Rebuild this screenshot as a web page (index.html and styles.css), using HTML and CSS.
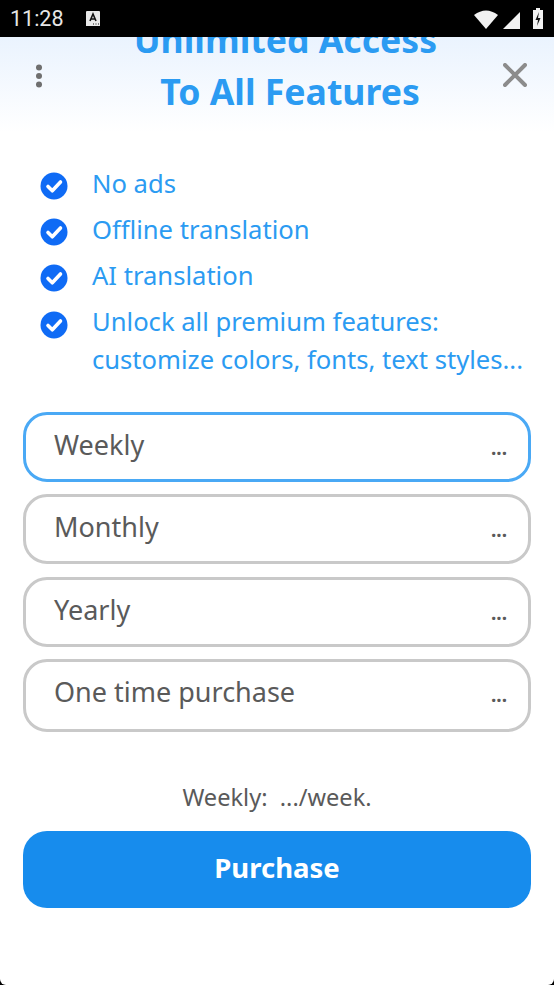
FILE: index.html
```html
<!DOCTYPE html>
<html lang="en">
<head>
<meta charset="utf-8">
<title>Unlimited Access</title>
<link rel="stylesheet" href="styles.css">
</head>
<body>
<div class="status">
  <span class="time">11:28</span>
  <svg class="notif" width="14" height="16" viewBox="0 0 14 16"><path d="M1 0h12a1 1 0 0 1 1 1v14h-14v-14a1 1 0 0 1 1-1z" fill="#e8e8e8"/><path d="M4 10l3-7 3 7M5 8h4" fill="none" stroke="#111" stroke-width="1.6"/><path d="M7 13h1M9.500 13h1M12 13h1" stroke="#111" stroke-width="1"/></svg>
  <span class="status-space"></span>
  <svg class="wifi" width="24" height="19" viewBox="0 0 24 19"><path d="M0 5Q12-4 24 5L12 19z" fill="#f2f2f2"/></svg>
  <svg class="signal" width="17" height="17" viewBox="0 0 17 17"><path d="M17 0v17H0z" fill="#f2f2f2"/></svg>
  <svg class="battery" width="10" height="21" viewBox="0 0 10 21"><path d="M3 0h4v2h3v19H0V2h3z" fill="#f2f2f2"/><path d="M6 4L2.500 12h2.500L4 18 7.500 10H5z" fill="#111"/></svg>
</div>
<main class="screen">
  <header class="hero">
    <svg class="menu" width="8" height="24" viewBox="0 0 8 24"><circle cx="4" cy="3.500" r="3" fill="#6f6f6f"/><circle cx="4" cy="12" r="3" fill="#6f6f6f"/><circle cx="4" cy="20.500" r="3" fill="#6f6f6f"/></svg>
    <h1 class="title">Unlimited Access&nbsp;<br>To All Features</h1>
    <svg class="close" width="24" height="24" viewBox="0 0 24 24"><path d="M2 2L22 22M22 2L2 22" stroke="#8c8c8c" stroke-width="4" stroke-linecap="round"/></svg>
  </header>
  <ul class="features">
    <li class="feature"><svg class="check" viewBox="0 0 28 28"><circle cx="14" cy="14" r="13.500" fill="#0f6bf5"/><path d="M8 14.500l4.300 4.300L20.500 10" fill="none" stroke="#fff" stroke-width="3.600" stroke-linecap="round" stroke-linejoin="round"/></svg><span>No ads</span></li>
    <li class="feature"><svg class="check" viewBox="0 0 28 28"><circle cx="14" cy="14" r="13.500" fill="#0f6bf5"/><path d="M8 14.500l4.300 4.300L20.500 10" fill="none" stroke="#fff" stroke-width="3.600" stroke-linecap="round" stroke-linejoin="round"/></svg><span>Offline translation</span></li>
    <li class="feature"><svg class="check" viewBox="0 0 28 28"><circle cx="14" cy="14" r="13.500" fill="#0f6bf5"/><path d="M8 14.500l4.300 4.300L20.500 10" fill="none" stroke="#fff" stroke-width="3.600" stroke-linecap="round" stroke-linejoin="round"/></svg><span>AI translation</span></li>
    <li class="feature"><svg class="check" viewBox="0 0 28 28"><circle cx="14" cy="14" r="13.500" fill="#0f6bf5"/><path d="M8 14.500l4.300 4.300L20.500 10" fill="none" stroke="#fff" stroke-width="3.600" stroke-linecap="round" stroke-linejoin="round"/></svg><span>Unlock all premium features:<br>customize colors, fonts, text styles...</span></li>
  </ul>
  <div class="plans">
    <div class="plan selected"><span>Weekly</span><span class="price">...</span></div>
    <div class="plan"><span>Monthly</span><span class="price">...</span></div>
    <div class="plan"><span>Yearly</span><span class="price">...</span></div>
    <div class="plan tall"><span>One time purchase</span><span class="price">...</span></div>
  </div>
  <p class="summary">Weekly:&nbsp; .../week.</p>
  <button class="buy" type="button">Purchase</button>
</main>
</body>
</html>
```
FILE: styles.css
```css
* { box-sizing: border-box; }
html, body { margin: 0; padding: 0; }
body {
  width: 554px;
  height: 985px;
  overflow: hidden;
  background: #000;
  font-family: "Noto Sans", "Open Sans", sans-serif;
}
.status {
  height: 37px;
  background: #000;
  display: flex;
  align-items: center;
  padding: 0 11px 0 10px;
  color: #e6e6e6;
}
.time {
  font-family: Roboto, sans-serif;
  font-size: 21.500px;
  line-height: 37px;
}
.notif { margin-left: 22px; }
.status-space { flex: 1; }
.wifi { margin-top: 2px; }
.signal { margin: 4px 0 0 5px; }
.battery { margin: 0 0 0 13px; }
.screen {
  height: 948px;
  overflow: hidden;
  background: #fff;
  border-radius: 0 0 6px 6px;
  padding: 0 23px;
}
.hero {
  height: 95px;
  margin: 0 -23px;
  padding: 0 27px 0 35px;
  display: flex;
  justify-content: space-between;
  background: linear-gradient(#eaf3fe, #ffffff);
}
.menu { margin-top: 27px; flex: none; }
.close { margin-top: 26px; flex: none; }
.title {
  margin: -24px 0 0 34px;
  text-align: center;
  font-size: 35.600px;
  line-height: 52px;
  font-weight: 700;
  color: #2b9bf2;
  white-space: nowrap;
}
.features {
  list-style: none;
  margin: 0;
  padding: 33px 0 0 17px;
  color: #2b9bf2;
  font-size: 25.600px;
  line-height: 38px;
}
.feature {
  display: flex;
  align-items: flex-start;
  gap: 25px;
  margin-bottom: 8px;
}
.feature span { margin-left: -1px; }
.check { width: 28px; height: 28px; flex: none; margin-top: 7px; }
.feature:last-child .check { margin-top: 8px; }
.plans {
  display: flex;
  flex-direction: column;
  gap: 12.300px;
  margin-top: 33px;
}
.plan {
  height: 70px;
  border: 3px solid #c9c9c9;
  border-radius: 24px;
  padding: 0 21px 0 28px;
  display: flex;
  justify-content: space-between;
  color: #5a5a5a;
  font-size: 27px;
  line-height: 59px;
}
.plan.selected { border-color: #4aa9f5; }
.plan.tall { height: 73px; }
.price { font-size: 19px; line-height: 66px; font-weight: 700; }
.summary {
  margin: 45px 0 0;
  text-align: center;
  color: #5a5a5a;
  font-size: 23.600px;
  line-height: 40px;
}
.buy {
  display: block;
  width: 100%;
  height: 77px;
  margin-top: 14px;
  padding: 0 0 3px;
  border: 0;
  border-radius: 24px;
  background: #178ced;
  color: #fff;
  font: 700 27.500px "Noto Sans", "Open Sans", sans-serif;
}
```
